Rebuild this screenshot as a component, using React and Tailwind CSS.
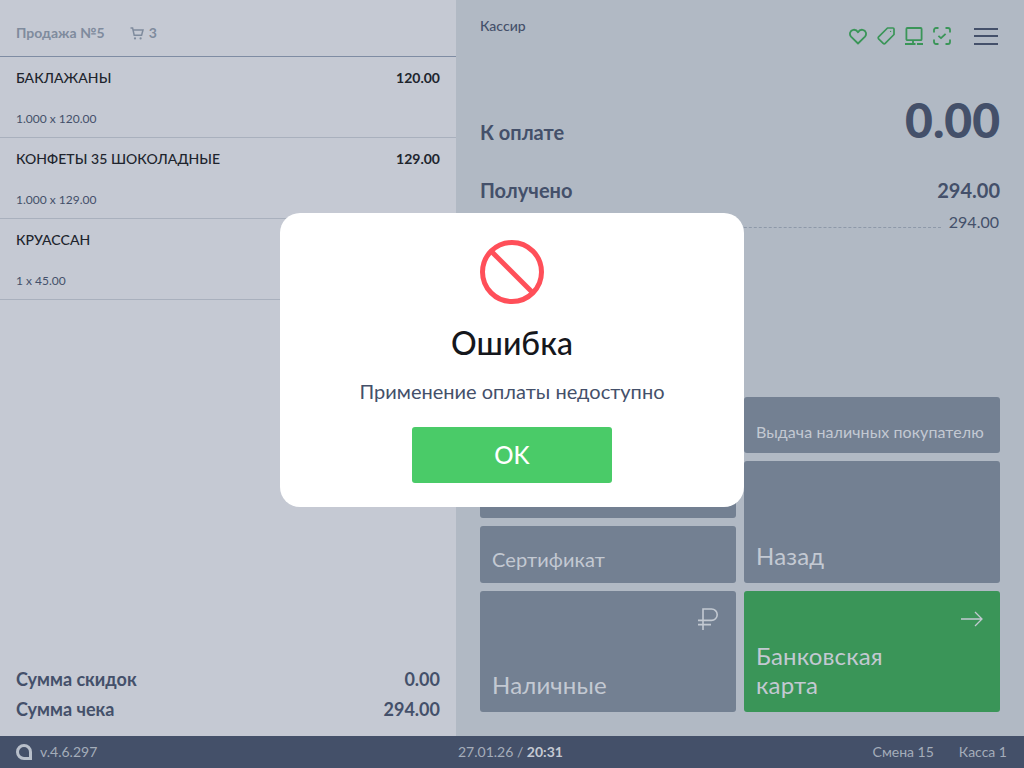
const items = [
  { name: 'БАКЛАЖАНЫ', total: '120.00', calc: '1.000 x 120.00' },
  { name: 'КОНФЕТЫ 35 ШОКОЛАДНЫЕ', total: '129.00', calc: '1.000 x 129.00' },
  { name: 'КРУАССАН', total: '45.00', calc: '1 x 45.00' },
]

const labelSizes = {
  small: 'px-3 pb-[11px] text-base leading-[20px] tracking-[0.08px]',
  medium: 'px-3 pb-[14px] text-[20px] leading-[20px] tracking-[0.1px]',
  large: 'px-3 pb-[13px] text-2xl leading-[29px] tracking-[0.15px]',
}

function CartIcon() {
  return (
    <svg width="14" height="13" viewBox="0 0 14 13" fill="none" stroke="currentColor" strokeWidth="1.5">
      <path d="M0.5 1 H2.6 L4.2 8.2 H11.6 L13 3 H3.4" />
      <circle cx="5" cy="11.4" r="1.1" fill="currentColor" stroke="none" />
      <circle cx="10.6" cy="11.4" r="1.1" fill="currentColor" stroke="none" />
    </svg>
  )
}

function HeartIcon() {
  return (
    <svg width="18" height="18" viewBox="0 0 18 18" fill="none" stroke="#3a9558" strokeWidth="1.8" strokeLinejoin="round">
      <path d="M9 16.5 L2 9.6 C0 7.4 1 3.4 4.3 2.8 C6.2 2.5 8 3.4 9 5.2 C10 3.4 11.8 2.5 13.7 2.8 C17 3.4 18 7.4 16 9.6 Z" />
    </svg>
  )
}

function TagIcon() {
  return (
    <svg width="18" height="18" viewBox="0 0 18 18" fill="none" stroke="#3a9558" strokeWidth="1.7" strokeLinejoin="round">
      <path d="M10.5 1 H16 a1 1 0 0 1 1 1 V7.5 L8.2 16.4 a1.4 1.4 0 0 1 -2 0 L1.6 11.8 a1.4 1.4 0 0 1 0 -2 Z" />
      <circle cx="13.6" cy="4.4" r="0.6" fill="#3a9558" stroke="none" />
    </svg>
  )
}

function MonitorIcon() {
  return (
    <svg width="18" height="18" viewBox="0 0 18 18" fill="none" stroke="#3a9558" strokeWidth="1.8">
      <rect x="1.4" y="1" width="15.2" height="12.2" rx="1" />
      <path d="M8 13 V17 M0 17 H10.5 M12 17 H18" />
    </svg>
  )
}

function ScanCheckIcon() {
  return (
    <svg width="18" height="18" viewBox="0 0 18 18" fill="none" stroke="#3a9558" strokeWidth="1.8" strokeLinejoin="round">
      <path d="M1 5.5 V3 a2 2 0 0 1 2 -2 H5.5 M12.5 1 H15 a2 2 0 0 1 2 2 V5.5 M17 12.5 V15 a2 2 0 0 1 -2 2 H12.5 M5.5 17 H3 a2 2 0 0 1 -2 -2 V12.5" />
      <path d="M5.4 8.8 L8 11.2 L12.6 6.8" />
    </svg>
  )
}

function PayButton({ label, size = 'small', className = 'bg-[#738092]', children }) {
  return (
    <div className={`relative flex flex-col justify-end rounded-[3px] text-[#c3c9d2] ${className}`}>
      {children}
      <div className={labelSizes[size]}>{label}</div>
    </div>
  )
}

export default function App() {
  return (
    <div className="relative flex h-[768px] w-[1024px] flex-col overflow-hidden font-['Lato',sans-serif]">
      <div className="flex h-[736px]">
        <div className="flex w-[456px] flex-col bg-[#c5c9d3]">
          <div className="flex h-[57px] items-center gap-[25px] border-b border-[#7f8ca3] px-4 pt-[10px] text-sm font-bold text-[#7f8b9d]">
            <span>Продажа №5</span>
            <span className="flex items-center gap-[5px]">
              <CartIcon />
              3
            </span>
          </div>
          {items.map((item) => (
            <div key={item.name} className="flex h-[81px] flex-col justify-between border-b border-[#a9b0bd] px-4 pt-[12px] pb-[10px]">
              <div className="flex justify-between text-sm leading-[18px] text-[#20242d]">
                <span className="font-medium tracking-[0.05px]">{item.name}</span>
                <span className="font-bold">{item.total}</span>
              </div>
              <div className="text-xs leading-[16px] text-[#44506a]">{item.calc}</div>
            </div>
          ))}
          <div className="mt-auto flex flex-col gap-[6px] px-4 pb-[15px] text-lg font-bold leading-[24px] text-[#44506a]">
            <div className="flex justify-between">
              <span>Сумма скидок</span>
              <span>0.00</span>
            </div>
            <div className="flex justify-between">
              <span>Сумма чека</span>
              <span>294.00</span>
            </div>
          </div>
        </div>

        <div className="flex w-[568px] flex-col bg-[#b1b9c4] px-6 pb-6 text-[#44506a]">
          <div className="flex h-[60px] justify-between pt-[18px]">
            <span className="text-sm font-medium leading-[16px]">Кассир</span>
            <div className="mt-[9px] flex h-[18px] items-center gap-[10px]">
              <HeartIcon />
              <TagIcon />
              <MonitorIcon />
              <ScanCheckIcon />
              <div className="mr-[2px] ml-[13px] flex w-6 flex-col gap-[5.5px]">
                <div className="h-[2px] bg-[#44506a]" />
                <div className="h-[2px] bg-[#44506a]" />
                <div className="h-[2px] bg-[#44506a]" />
              </div>
            </div>
          </div>
          <div className="mt-[30px] flex items-end justify-between">
            <span className="pb-[6px] text-xl font-bold leading-[24px]">К оплате</span>
            <span className="text-5xl font-black leading-[60px]">0.00</span>
          </div>
          <div className="mt-[28px] flex items-center justify-between text-xl font-bold leading-[24px]">
            <span>Получено</span>
            <span>294.00</span>
          </div>
          <div className="mt-[10px] flex items-end justify-between">
            <div className="mb-[4px] flex-1 border-b border-dashed border-[#8e99a9]" />
            <span className="mr-[1px] ml-2 text-base leading-[20px]">294.00</span>
          </div>

          <div className="mt-auto grid grid-cols-2 grid-rows-[56px_57px_57px_121px] gap-2">
            <PayButton label="" />
            <PayButton label="Выдача наличных покупателю" />
            <PayButton label="" />
            <PayButton label="Назад" size="large" className="row-span-2 bg-[#738092]" />
            <PayButton label="Сертификат" size="medium" />
            <PayButton label="Наличные" size="large">
              <svg className="absolute top-[17px] right-[18px]" width="20" height="22" viewBox="0 0 20 22" fill="none" stroke="#c3c9d2" strokeWidth="1.6">
                <path d="M5 22 V1 H13.5 a5.7 5.7 0 0 1 0 11.4 H5 M0 12.4 H5 M0 16.6 H13" />
              </svg>
            </PayButton>
            <PayButton label={<>Банковская<br />карта</>} size="large" className="bg-[#3a9558]">
              <svg className="absolute top-[20px] right-[16px]" width="24" height="16" viewBox="0 0 24 16" fill="none" stroke="#c3c9d2" strokeWidth="1.3">
                <path d="M1 8 H22 M15 1 L22 8 L15 15" />
              </svg>
            </PayButton>
          </div>
        </div>
      </div>

      <div className="flex h-8 items-center bg-[#445069] pr-[17px] pl-4 text-sm text-[#a4adba]">
        <div className="flex w-[442px] items-center gap-[8px]">
          <svg width="16" height="16" viewBox="0 0 16 16" fill="none" stroke="#b8bfca" strokeWidth="3">
            <path d="M14.5 14.5 H8 A6.5 6.5 0 1 1 14.5 8 Z" />
          </svg>
          <span>v.4.6.297</span>
        </div>
        <div>
          27.01.26 / <span className="font-bold text-[#c5c9d3]">20:31</span>
        </div>
        <div className="ml-auto flex gap-[25px]">
          <span>Смена 15</span>
          <span>Касса 1</span>
        </div>
      </div>

      <div className="absolute top-[213px] left-[280px] flex h-[294px] w-[464px] flex-col items-center rounded-[20px] bg-white pt-[27px]">
        <svg width="64" height="64" viewBox="0 0 64 64" fill="none" stroke="#ff4f59" strokeWidth="5">
          <circle cx="32" cy="32" r="29.5" />
          <path d="M12 12 L52 52" />
        </svg>
        <div className="mt-[19px] text-[32px] font-medium leading-[40px] text-[#15171c]">Ошибка</div>
        <div className="mt-[16px] text-[20px] leading-[24px] text-[#44506a]">Применение оплаты недоступно</div>
        <div className="mt-[24px] flex h-[56px] w-[200px] items-center justify-center rounded-[3px] bg-[#4acb68] text-2xl font-medium text-white">OK</div>
      </div>
    </div>
  )
}
